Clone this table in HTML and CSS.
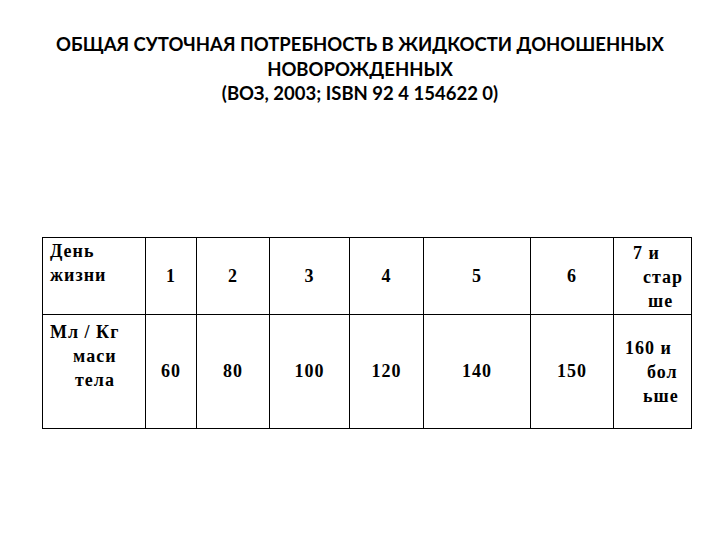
FILE: index.html
```html
<!DOCTYPE html>
<html lang="ru">
<head>
<meta charset="utf-8">
<link rel="stylesheet" href="styles.css">
</head>
<body>
<div class="page">
  <h1 class="title">
    <span class="tl">ОБЩАЯ СУТОЧНАЯ ПОТРЕБНОСТЬ В ЖИДКОСТИ ДОНОШЕННЫХ</span>
    <span class="tl">НОВОРОЖДЕННЫХ</span>
    <span class="tl">(ВОЗ, 2003; ISBN 92 4 154622 0)</span>
  </h1>
  <table class="grid">
    <colgroup>
      <col class="c0"><col class="c1"><col class="c2"><col class="c3"><col class="c4"><col class="c5"><col class="c6"><col class="c7">
    </colgroup>
    <tr class="r1">
      <td class="cell lab t1"><span class="ln p7">День</span><span class="ln p7">жизни</span></td>
      <td class="cell num">1</td>
      <td class="cell num">2</td>
      <td class="cell num">3</td>
      <td class="cell num">4</td>
      <td class="cell num">5</td>
      <td class="cell num">6</td>
      <td class="cell lab t3"><span class="ln p19">7 и</span><span class="ln p29">стар</span><span class="ln p34">ше</span></td>
    </tr>
    <tr class="r2">
      <td class="cell lab t5"><span class="ln p7">Мл / Кг</span><span class="ln p30">маси</span><span class="ln p32">тела</span></td>
      <td class="cell num">60</td>
      <td class="cell num">80</td>
      <td class="cell num">100</td>
      <td class="cell num">120</td>
      <td class="cell num">140</td>
      <td class="cell num">150</td>
      <td class="cell lab t21"><span class="ln p11">160 и</span><span class="ln p33">бол</span><span class="ln p29">ьше</span></td>
    </tr>
  </table>
</div>
</body>
</html>
```
FILE: styles.css
```css
html, body {
  margin: 0;
  padding: 0;
  background: #ffffff;
}
.page {
  width: 720px;
  height: 540px;
  padding-top: 32px;
  box-sizing: border-box;
}
.title {
  margin: 0;
  font-family: Lato, "Noto Sans", sans-serif;
  font-weight: 700;
  font-size: 18.5px;
  line-height: 24.5px;
  text-align: center;
  color: #000;
}
.tl {
  display: block;
}
.grid {
  margin-top: 131px;
  margin-left: 42px;
  border-collapse: collapse;
  table-layout: fixed;
  width: 649px;
  font-family: "Liberation Serif", "Times New Roman", serif;
  font-weight: 700;
  font-size: 18px;
  line-height: 24px;
  letter-spacing: 1px;
  color: #000;
}
.cell {
  border: 1px solid #000;
  padding: 0;
}
.c0 { width: 103px; }
.c1 { width: 51px; }
.c2 { width: 73px; }
.c3 { width: 80px; }
.c4 { width: 74px; }
.c5 { width: 107px; }
.c6 { width: 83px; }
.c7 { width: 78px; }
.r1 { height: 77px; }
.r2 { height: 114px; }
.num {
  text-align: center;
  vertical-align: middle;
}
.lab {
  vertical-align: top;
}
.ln {
  display: block;
  white-space: nowrap;
}
.t1 { padding-top: 1px; }
.t3 { padding-top: 3px; }
.t5 { padding-top: 5px; }
.t21 { padding-top: 21px; }
.p7 { padding-left: 7px; }
.p11 { padding-left: 11px; }
.p19 { padding-left: 19px; }
.p29 { padding-left: 29px; }
.p30 { padding-left: 30px; }
.p32 { padding-left: 32px; }
.p33 { padding-left: 33px; }
.p34 { padding-left: 34px; }
```
